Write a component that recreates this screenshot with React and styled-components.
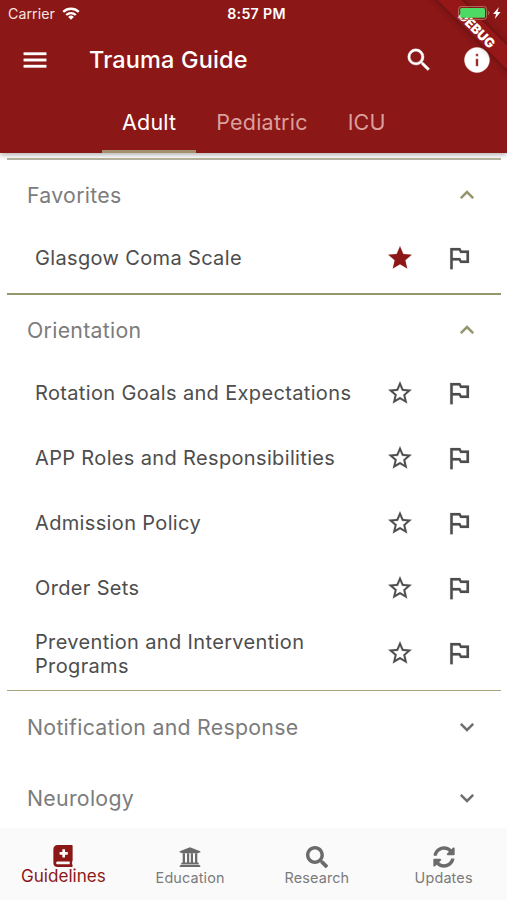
import React, { useState } from "react";
import styled, { createGlobalStyle } from "styled-components";
import {
  MdExpandLess,
  MdExpandMore,
  MdInfo,
  MdMenu,
  MdOutlinedFlag,
  MdSearch,
  MdStar,
  MdStarBorder,
} from "react-icons/md";
import { FaBookMedical, FaSearch, FaSyncAlt } from "react-icons/fa";

const GlobalStyle = createGlobalStyle`
  * {
    box-sizing: border-box;
  }
  body {
    margin: 0;
    background: #fff;
    font-family: Inter, "Liberation Sans", sans-serif;
  }
`;

const Container = styled.div`
  position: relative;
  height: 900px;
  display: flex;
  flex-direction: column;
  overflow: hidden;
`;

const Header = styled.header`
  flex: none;
  height: 153px;
  display: flex;
  flex-direction: column;
  background: #8b1717;
  color: #fff;
  box-shadow: 0 2px 5px rgba(0, 0, 0, 0.3);
  z-index: 1;
`;

const StatusBar = styled.div`
  height: 27px;
  padding: 0 5px 0 8px;
  display: grid;
  grid-template-columns: 1fr auto 1fr;
  align-items: center;
`;

const Carrier = styled.div`
  display: flex;
  align-items: center;
  gap: 7px;
  font-size: 14.2px;
  letter-spacing: 0.05px;
  color: #f8e4e0;
`;

const Time = styled.div`
  padding-left: 3px;
  font-size: 14.2px;
  font-weight: 600;
  letter-spacing: 0.3px;
`;

const Power = styled.div`
  position: relative;
  z-index: 2;
  display: flex;
  justify-content: flex-end;
  align-items: center;
`;

const AppBar = styled.div`
  height: 65px;
  padding: 0 15px 0 20px;
  display: flex;
  align-items: center;

  path:not([fill="none"]) {
    stroke: #fff;
    stroke-width: 0.3px;
  }
`;

const Title = styled.h1`
  flex: 1;
  margin: 0 0 0 39px;
  font-size: 23.5px;
  font-weight: 500;
  letter-spacing: 0.15px;
`;

const Actions = styled.div`
  display: flex;
  align-items: center;
  gap: 28px;
`;

const Tabs = styled.nav`
  flex: 1;
  display: flex;
  padding-left: 102px;
`;

const Tab = styled.div`
  display: flex;
  align-items: center;
  padding: 2px 20px 0;
  font-size: 21.5px;
  letter-spacing: 0.2px;
  color: ${(props) => (props.$active ? "#fff" : "#dc9f9b")};
  border-bottom: 3px solid ${(props) => (props.$active ? "#a38f6c" : "transparent")};
`;

const Ribbon = styled.div`
  position: absolute;
  z-index: 1;
  top: 20px;
  left: 408px;
  width: 140px;
  height: 17px;
  transform: rotate(45deg);
  background: #951717;
  box-shadow: 0 0 7px rgba(0, 0, 0, 0.4);
  color: #fff;
  font-size: 13.2px;
  font-weight: 900;
  line-height: 20px;
  text-align: center;
`;

const List = styled.main`
  flex: 1;
  min-height: 0;
  overflow: hidden;
  padding: 5px 6px 0 7px;
`;

const Section = styled.section`
  border-top: ${(props) => props.$line}px solid ${(props) => props.$color};
  padding-bottom: ${(props) => (props.$open ? 2 : 0)}px;
`;

const SectionHeader = styled.div`
  height: ${(props) => (props.$open ? 66 : 71)}px;
  padding: ${(props) => (props.$open ? "3px 20px 0 20px" : "0 20px 0 20px")};
  display: flex;
  align-items: center;
  justify-content: space-between;
  font-size: 21.3px;
  letter-spacing: 0.28px;
  color: #7c7c7c;
  cursor: pointer;
`;

const Chevron = styled.span`
  display: flex;
  font-size: 28px;
  color: ${(props) => (props.$open ? "#94946b" : "#6e6e6e")};

  path:not([fill="none"]) {
    stroke: currentColor;
    stroke-width: 0.1px;
  }
`;

const Row = styled.div`
  min-height: 65px;
  padding: 0 27px 0 28px;
  display: flex;
  align-items: center;
  color: #4d4d4d;

  &:nth-child(6) {
    min-height: 67px;
    padding-bottom: 1px;
  }
`;

const RowText = styled.div`
  flex: 1;
  font-size: 20px;
  line-height: 24.4px;
  letter-spacing: 0.35px;
`;

const RowIcons = styled.div`
  display: flex;
  align-items: center;
  gap: 30px;
  padding-bottom: 2px;

  path:not([fill="none"]) {
    stroke: currentColor;
    stroke-width: 0.15px;
  }
`;

const BottomNav = styled.nav`
  flex: none;
  height: 72px;
  display: grid;
  grid-template-columns: repeat(4, 1fr);
  background: #fafafa;
  z-index: 1;
`;

const NavItem = styled.div`
  display: flex;
  flex-direction: column;
  align-items: center;
  padding-top: ${(props) => (props.$active ? 17 : 18)}px;
  gap: ${(props) => (props.$active ? 0 : 1)}px;
  font-size: ${(props) => (props.$active ? 17.1 : 14.4)}px;
  line-height: ${(props) => (props.$active ? 17 : 18)}px;
  letter-spacing: ${(props) => (props.$active ? 0 : 0.15)}px;
  color: ${(props) => (props.$active ? "#8b1717" : "#7b7b7b")};

  svg {
    flex: none;
    color: ${(props) => (props.$active ? "#8b1717" : "#6b6b6b")};
  }
`;

const WifiIcon = () => (
  <svg width="18" height="13" viewBox="0 0 18 13" fill="none" stroke="#fff" strokeWidth="2.3">
    <path d="M1.2 4.9a11.2 11.2 0 0 1 15.6 0" />
    <path d="M4.2 8a7 7 0 0 1 9.6 0" />
    <path d="M9 12.7 6.2 9.9a4.1 4.1 0 0 1 5.6 0z" fill="#fff" stroke="none" />
  </svg>
);

const BatteryIcon = () => (
  <svg width="44" height="15" viewBox="0 0 44 15">
    <rect x="0.6" y="0.4" width="28" height="13" rx="3" fill="none" stroke="#b07360" strokeWidth="1" />
    <rect x="2.2" y="2" width="24.8" height="9.8" rx="1.5" fill="#4cd964" />
    <path d="M30.2 4.8v4.2c1.6-.6 1.6-3.6 0-4.2z" fill="#b07360" />
    <path d="M40.9.9 35.1 7.9h3l-1.3 5.2 5.8-7.2h-3.1z" fill="#fff" />
  </svg>
);

const ColumnsIcon = () => (
  <svg width="22" height="22" viewBox="0 0 22 22" fill="currentColor">
    <path d="M11 1.3 21.3 5.2v1.4H20l-.6.7H2.6L2 6.6H.7V5.2z" />
    <path d="M3.7 7.3H6v10H3.7zM8 7.3h2.2v10H8zM11.8 7.3H14v10h-2.2zM16 7.3h2.3v10H16z" />
    <path d="M2.9 16.6h16.2l.6.7v.9H2.3v-.9z" />
    <path d="M2 18.7h18l1.3 1v1.4H.7v-1.4z" />
  </svg>
);

const sections = [
  { title: "Favorites", open: true, line: 2, color: "#b7b59c", rows: ["Glasgow Coma Scale"] },
  {
    title: "Orientation",
    open: true,
    line: 2,
    color: "#94966c",
    rows: [
      "Rotation Goals and Expectations",
      "APP Roles and Responsibilities",
      "Admission Policy",
      "Order Sets",
      "Prevention and Intervention Programs",
    ],
  },
  { title: "Notification and Response", open: false, line: 1, color: "#a5a47c", rows: [] },
  { title: "Neurology", open: false, line: 0, color: "transparent", rows: [] },
];

const navItems = [
  { label: "Guidelines", icon: <FaBookMedical size={22} /> },
  { label: "Education", icon: <ColumnsIcon /> },
  { label: "Research", icon: <FaSearch size={22} /> },
  { label: "Updates", icon: <FaSyncAlt size={22} /> },
];

const App = () => {
  const [tab, setTab] = useState("Adult");
  const [favorites, setFavorites] = useState(["Glasgow Coma Scale"]);

  const toggle = (name) =>
    setFavorites(
      favorites.includes(name) ? favorites.filter((f) => f !== name) : [...favorites, name]
    );

  return (
    <Container>
      <GlobalStyle />
      <Header>
        <StatusBar>
          <Carrier>
            Carrier <WifiIcon />
          </Carrier>
          <Time>8:57 PM</Time>
          <Power>
            <BatteryIcon />
          </Power>
        </StatusBar>
        <AppBar>
          <MdMenu size={30} />
          <Title>Trauma Guide</Title>
          <Actions>
            <MdSearch size={30} />
            <MdInfo size={30} />
          </Actions>
        </AppBar>
        <Tabs>
          {["Adult", "Pediatric", "ICU"].map((name) => (
            <Tab key={name} $active={tab === name} onClick={() => setTab(name)}>
              {name}
            </Tab>
          ))}
        </Tabs>
        <Ribbon>DEBUG</Ribbon>
      </Header>

      <List>
        {sections.map((section) => (
          <Section
            key={section.title}
            $open={section.open}
            $line={section.line}
            $color={section.color}
          >
            <SectionHeader $open={section.open}>
              {section.title}
              <Chevron $open={section.open}>
                {section.open ? <MdExpandLess /> : <MdExpandMore />}
              </Chevron>
            </SectionHeader>
            {section.rows.map((row) => (
              <Row key={row}>
                <RowText>{row}</RowText>
                <RowIcons>
                  {favorites.includes(row) ? (
                    <MdStar size={28} color="#8b1717" onClick={() => toggle(row)} />
                  ) : (
                    <MdStarBorder size={28} onClick={() => toggle(row)} />
                  )}
                  <MdOutlinedFlag size={30} />
                </RowIcons>
              </Row>
            ))}
          </Section>
        ))}
      </List>

      <BottomNav>
        {navItems.map((item, i) => (
          <NavItem key={item.label} $active={i === 0}>
            {item.icon}
            {item.label}
          </NavItem>
        ))}
      </BottomNav>
    </Container>
  );
};

export default App;
